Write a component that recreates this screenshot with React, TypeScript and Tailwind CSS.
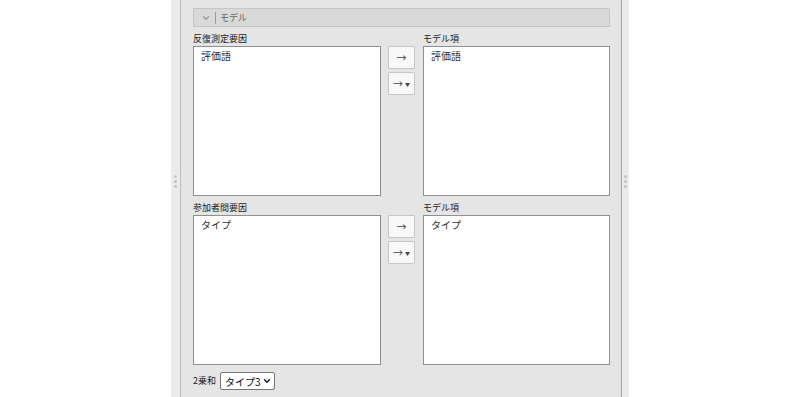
import { ChevronDown } from 'lucide-react';

const font = { fontFamily: '"Noto Sans CJK JP", "Noto Sans", sans-serif' };

const Grip = () => (
    <div className="flex flex-col gap-[2px] items-center">
        <span className="w-[3px] h-[3px] rounded-full bg-[#c4c4c4]" />
        <span className="w-[3px] h-[3px] rounded-full bg-[#c4c4c4]" />
        <span className="w-[3px] h-[3px] rounded-full bg-[#c4c4c4]" />
    </div>
);

const ListBox = ({ items, width }: { items: string[]; width: string }) => (
    <div className={`${width} h-[150px] bg-white border border-[#8f8f8f] pl-[7px] pt-[2px]`}>
        {items.map((item) => (
            <div key={item} className="text-[10px] leading-[14px] text-[#333]">{item}</div>
        ))}
    </div>
);

const MoveButtons = () => (
    <div className="w-[27px] flex flex-col gap-[3px]">
        <button className="w-[27px] h-[23px] bg-[#f8f8f8] border border-[#c6c6c6] rounded-[1px] flex items-center justify-center text-[10px] text-[#444]">
            →
        </button>
        <button className="w-[27px] h-[23px] bg-[#f8f8f8] border border-[#c6c6c6] rounded-[1px] flex items-center justify-center gap-[2px] text-[10px] text-[#444]">
            <span>→</span>
            <span className="text-[5px]">▼</span>
        </button>
    </div>
);

const Section = ({ left, right, item }: { left: string; right: string; item: string }) => (
    <div className="flex flex-col">
        <div className="flex h-[19px] items-end pb-[2px] text-[9px] leading-[11px] text-[#222]">
            <span className="w-[230px]">{left}</span>
            <span>{right}</span>
        </div>
        <div className="flex">
            <ListBox items={[item]} width="w-[188px]" />
            <div className="ml-[7px] mr-[8px]"><MoveButtons /></div>
            <ListBox items={[item]} width="w-[187px]" />
        </div>
    </div>
);

export default function App() {
    return (
        <div className="w-[800px] h-[397px] bg-white flex justify-center overflow-hidden" style={font}>
            <div className="w-[458px] h-full flex">
                <div className="w-[10px] bg-[#ebebeb] border-r border-[#bdbdbd] flex items-center justify-center">
                    <div className="mt-[-34px]"><Grip /></div>
                </div>
                <div className="flex-1 bg-[#e5e5e5] pl-[12px] pr-[11px]">
                    <div className="mt-[8px] h-[19px] bg-[#d9d9d9] border border-[#c6c6c6] flex items-center pl-[7px]">
                        <ChevronDown className="w-[10px] h-[10px] text-[#9a9a9a]" strokeWidth={3} />
                        <span className="ml-[4px] w-px h-[12px] bg-[#9a9a9a]" />
                        <span className="ml-[4px] text-[9px] text-[#666]">モデル</span>
                    </div>
                    <Section left="反復測定要因" right="モデル項" item="評価語" />
                    <Section left="参加者間要因" right="モデル項" item="タイプ" />
                    <div className="mt-[7px] flex items-center gap-[4px]">
                        <span className="text-[9px] text-[#222]">2乗和</span>
                        <div className="h-[18px] bg-white border border-[#767676] rounded-[2px] flex items-center pl-[4px] pr-[2px] gap-[1px]">
                            <span className="text-[10px] text-[#111]">タイプ3</span>
                            <ChevronDown className="w-[10px] h-[10px] text-[#111]" strokeWidth={3} />
                        </div>
                    </div>
                </div>
                <div className="w-[8px] bg-[#ebebeb] border-l border-[#a8a8a8] flex items-center justify-center">
                    <div className="mt-[-34px]"><Grip /></div>
                </div>
            </div>
        </div>
    );
}
